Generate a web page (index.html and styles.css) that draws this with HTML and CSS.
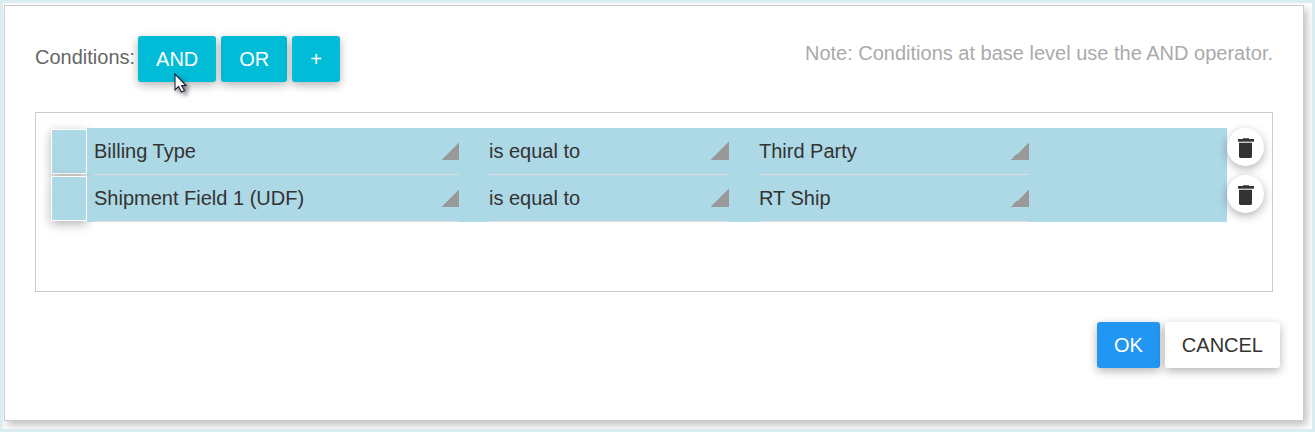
FILE: index.html
```html
<!DOCTYPE html>
<html lang="en">
<head>
<meta charset="utf-8">
<title>Conditions</title>
<link rel="stylesheet" href="styles.css">
</head>
<body>
<main class="dialog">
  <header class="toolbar">
    <div class="operators">
      <span class="label">Conditions:</span>
      <div class="button-group">
        <button class="btn btn-cyan btn-hovered" type="button">AND
          <svg class="pointer" width="20" height="26" viewBox="0 0 20 26" aria-hidden="true"><path d="M1 1v16l3.500-3.500 3 5.500 3-1.500-3-5h4.500z" fill="#fff" stroke="#1c2233" stroke-width="1.1"/></svg>
        </button>
        <button class="btn btn-cyan" type="button">OR</button>
        <button class="btn btn-cyan" type="button" aria-label="Add condition">+</button>
      </div>
    </div>
    <p class="note">Note: Conditions at base level use the AND operator.</p>
  </header>

  <section class="conditions">
    <div class="row">
      <button class="handle" type="button" aria-label="Select condition 1"></button>
      <div class="fields">
        <select class="field" aria-label="Field"><option>Billing Type</option></select>
        <select class="field" aria-label="Comparison"><option>is equal to</option></select>
        <select class="field" aria-label="Value"><option>Third Party</option></select>
      </div>
      <button class="delete" type="button" aria-label="Delete condition 1">
        <svg width="16" height="20" viewBox="0 0 16 20" fill="#333" aria-hidden="true"><path d="M5 0h6v1H5z" fill="#666"/><path d="M0 1h16v2H0z"/><path d="M0 3h16v1H0z" fill="#777"/><path d="M1 4h13v1H1z" fill="#c4c8c8"/><path d="M1 5h13v14l-1 1H2l-1-1z"/></svg>
      </button>
    </div>
    <div class="row">
      <button class="handle" type="button" aria-label="Select condition 2"></button>
      <div class="fields">
        <select class="field" aria-label="Field"><option>Shipment Field 1 (UDF)</option></select>
        <select class="field" aria-label="Comparison"><option>is equal to</option></select>
        <select class="field" aria-label="Value"><option>RT Ship</option></select>
      </div>
      <button class="delete" type="button" aria-label="Delete condition 2">
        <svg width="16" height="20" viewBox="0 0 16 20" fill="#333" aria-hidden="true"><path d="M5 0h6v1H5z" fill="#666"/><path d="M0 1h16v2H0z"/><path d="M0 3h16v1H0z" fill="#777"/><path d="M1 4h13v1H1z" fill="#c4c8c8"/><path d="M1 5h13v14l-1 1H2l-1-1z"/></svg>
      </button>
    </div>
  </section>

  <footer class="actions">
    <button class="btn btn-blue" type="button">OK</button>
    <button class="btn btn-plain" type="button">CANCEL</button>
  </footer>
</main>
</body>
</html>
```
FILE: styles.css
```css
* {
  box-sizing: border-box;
}

html {
  height: 100%;
}

body {
  display: flex;
  min-height: 100%;
  margin: 0;
  padding: 2px 8px 8px 1px;
  border: 3px solid #d9edf2;
  background: #fff;
  color: #333;
  font-family: "Liberation Sans", Arial, sans-serif;
  font-size: 20px;
  line-height: 24px;
}

button,
select {
  font: inherit;
  color: inherit;
}

.dialog {
  flex: 1;
  padding: 30px;
  border: 1px solid #ccc;
  background: #fff;
  box-shadow: 3px 4px 8px rgba(0, 0, 0, 0.25);
}

.toolbar {
  display: flex;
  justify-content: space-between;
  align-items: flex-start;
}

.operators {
  display: flex;
  gap: 3px;
}

.label {
  padding-top: 9px;
  color: #666;
}

.note {
  margin: 0;
  padding-top: 5px;
  color: #aaa;
}

.button-group,
.actions {
  display: flex;
  gap: 5px;
}

.btn {
  height: 46px;
  padding: 0 17px;
  border: 0;
  border-radius: 3px;
  box-shadow: 0 3px 10px rgba(0, 0, 0, 0.3);
}

.btn-cyan {
  padding: 0 18px;
  background: #00bcd7;
  color: #fff;
}

.btn-blue {
  background: #2196f3;
  color: #fff;
}

.btn-plain {
  background: #fff;
}

.btn-hovered {
  position: relative;
}

.pointer {
  position: absolute;
  top: 37px;
  left: 36px;
  filter: drop-shadow(3px 3px 2px rgba(0, 0, 0, 0.5));
}

.conditions {
  min-height: 180px;
  margin-top: 30px;
  padding: 15px 8px 15px 15px;
  border: 1px solid #ccc;
}

.row {
  display: flex;
  align-items: flex-start;
}

.handle {
  width: 36px;
  height: 45px;
  margin-top: 1px;
  padding: 0;
  border: 1px solid #fff;
  background: #add8e5;
  box-shadow: 0 3px 10px rgba(0, 0, 0, 0.3);
}

.fields {
  flex: 1;
  display: grid;
  grid-template-columns: 365fr 240fr 270fr 168fr;
  column-gap: 30px;
  padding-left: 7px;
  background: #add8e5;
}

.field {
  appearance: none;
  width: 100%;
  height: 47px;
  padding: 0;
  border: 0;
  border-bottom: 1px solid #ddd;
  border-radius: 0;
  background: linear-gradient(135deg, transparent 50%, #999 50%) right 14px / 18px 18px no-repeat;
}

.delete {
  display: flex;
  align-items: center;
  justify-content: center;
  width: 37px;
  height: 38px;
  padding: 2px 0 0;
  border: 0;
  border-radius: 50%;
  background: #fff;
  box-shadow: 0 3px 10px rgba(0, 0, 0, 0.3);
}

.actions {
  justify-content: flex-end;
  margin: 30px -7px 0 0;
}
```
